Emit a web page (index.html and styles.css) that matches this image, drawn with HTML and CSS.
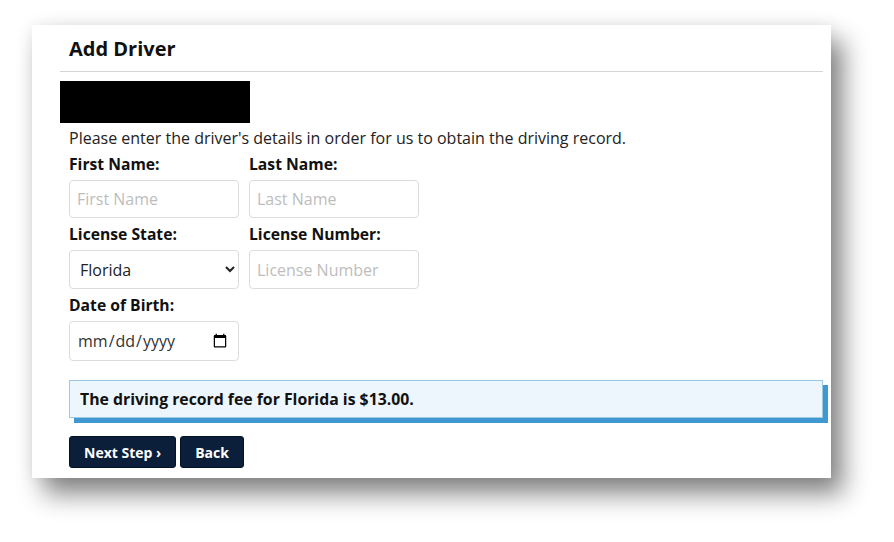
FILE: index.html
```html
<!DOCTYPE html>
<html>
<head>
<meta charset="utf-8">
<link rel="stylesheet" href="styles.css">
</head>
<body>
<div class="page">
  <div class="card">
    <h2 class="title">Add Driver</h2>
    <div class="rule"></div>
    <div class="redact"></div>
    <p class="intro">Please enter the driver's details in order for us to obtain the driving record.</p>
    <div class="form">
      <div class="row">
        <div class="field">
          <label class="lbl">First Name:</label>
          <input class="ctl" type="text" placeholder="First Name">
        </div>
        <div class="field">
          <label class="lbl">Last Name:</label>
          <input class="ctl" type="text" placeholder="Last Name">
        </div>
      </div>
      <div class="row">
        <div class="field">
          <label class="lbl">License State:</label>
          <select class="ctl sel"><option>Florida</option></select>
        </div>
        <div class="field">
          <label class="lbl">License Number:</label>
          <input class="ctl tall" type="text" placeholder="License Number">
        </div>
      </div>
      <div class="row">
        <div class="field">
          <label class="lbl">Date of Birth:</label>
          <input class="ctl date" type="date">
        </div>
      </div>
    </div>
    <div class="fee">The driving record fee for Florida is $13.00.</div>
    <div class="buttons">
      <button class="btn">Next Step ›</button>
      <button class="btn">Back</button>
    </div>
  </div>
</div>
</body>
</html>
```

FILE: styles.css
```css
html, body {
  margin: 0;
  padding: 0;
  background: #ffffff;
}
body {
  font-family: "Open Sans", "Liberation Sans", sans-serif;
  color: #1a1a1a;
}
.page {
  padding: 25px 0 64px 32px;
}
.card {
  width: 799px;
  height: 453px;
  box-sizing: border-box;
  background: #fff;
  padding: 0 8px 0 28px;
  box-shadow: 12px 16px 24px rgba(0,0,0,0.48), 0 0 16px rgba(0,0,0,0.08);
}
.title {
  margin: 0;
  padding: 12px 0 0 9px;
  height: 34px;
  font-size: 20px;
  font-weight: 700;
  color: #111;
  line-height: 24px;
}
.rule {
  height: 1px;
  background: #d4d4d4;
}
.redact {
  width: 190px;
  height: 42px;
  background: #000;
  margin-top: 9px;
}
.intro {
  margin: 5px 0 0 9px;
  font-size: 16px;
  line-height: 20px;
  color: #222;
}
.form {
  padding-left: 9px;
  margin-top: 6px;
}
.row {
  display: flex;
  gap: 10px;
  margin-bottom: 6px;
}
.field {
  display: flex;
  flex-direction: column;
  width: 170px;
}
.lbl {
  font-size: 15.7px;
  font-weight: 700;
  color: #111;
  line-height: 20px;
  margin-bottom: 6px;
}
.ctl {
  box-sizing: border-box;
  width: 170px;
  height: 38px;
  border: 1px solid #dcdcdc;
  border-radius: 4px;
  padding: 0 7px;
  font-family: "Open Sans", "Liberation Sans", sans-serif;
  font-size: 16px;
  color: #222;
  background: #fff;
  outline: none;
}
.ctl::placeholder {
  color: #bdbdbd;
}
.tall {
  height: 39px;
}
.sel {
  height: 39px;
  padding-left: 6px;
}
.date {
  height: 40px;
  font-size: 16px;
  color: #333;
  padding: 0 8px 0 7px;
}
.fee {
  margin: 19px 0 0 9px;
  width: 754px;
  height: 38px;
  box-sizing: border-box;
  background: #eef6fd;
  border: 1px solid #9cc9e8;
  box-shadow: 5px 5px 0 #3f98cf;
  padding: 0 10px;
  display: flex;
  align-items: center;
  font-size: 15.8px;
  font-weight: 700;
  color: #111;
}
.buttons {
  margin: 18px 0 0 9px;
  display: flex;
  gap: 4px;
}
.btn {
  background: #0b1e3a;
  color: #fff;
  border: 1px solid #061226;
  border-radius: 3px;
  height: 32px;
  padding: 0 14px;
  font-family: "Open Sans", "Liberation Sans", sans-serif;
  font-size: 14px;
  font-weight: 700;
  cursor: pointer;
}
```
